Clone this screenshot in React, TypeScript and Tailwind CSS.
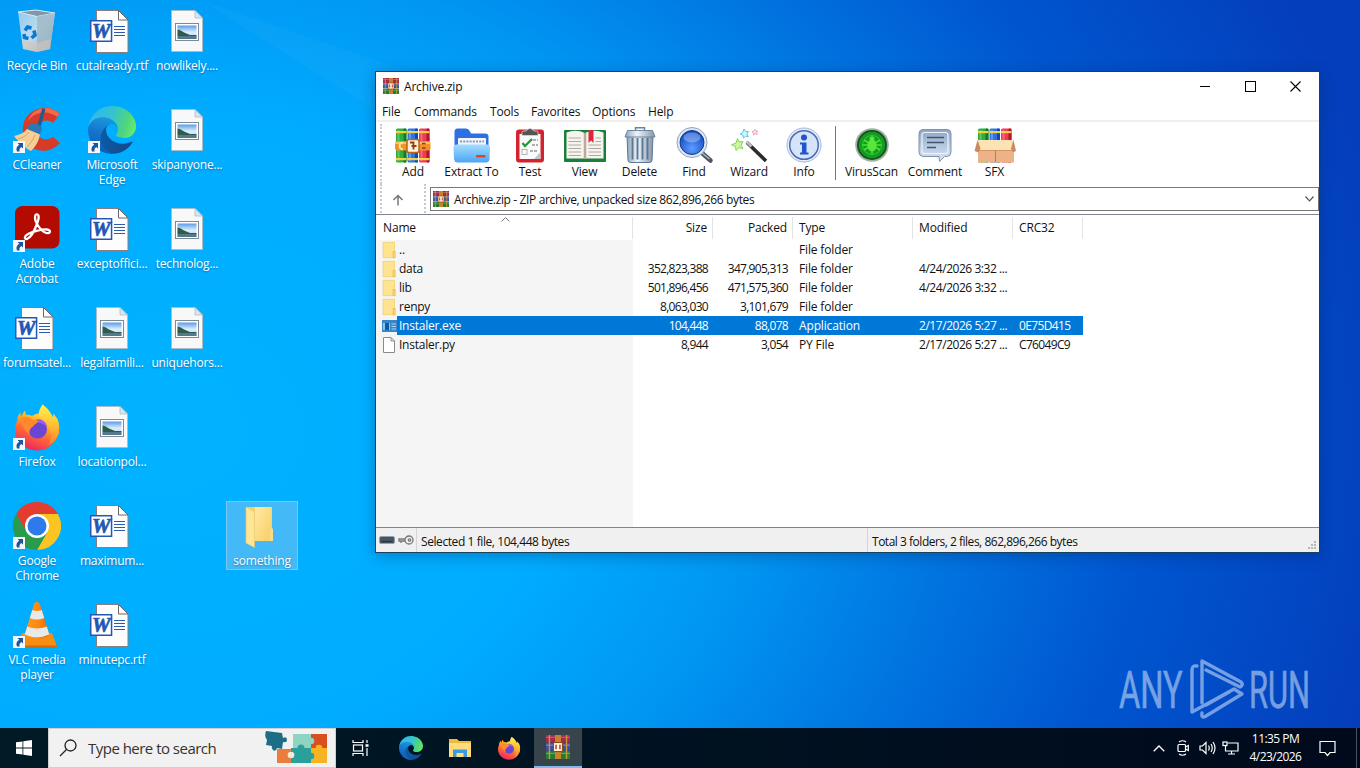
import type { ReactNode } from "react";

type Kind = "bin" | "word" | "image" | "ccleaner" | "edge" | "acrobat" | "firefox" | "chrome" | "vlc" | "folder";

type DesktopItem = {
  kind: Kind;
  label: string;
  place: string;
  shortcut?: boolean;
  selected?: boolean;
};

const desktop: DesktopItem[] = [
  { kind: "bin", label: "Recycle Bin", place: "col-start-1 row-start-1" },
  { kind: "ccleaner", label: "CCleaner", place: "col-start-1 row-start-2", shortcut: true },
  { kind: "acrobat", label: "Adobe\nAcrobat", place: "col-start-1 row-start-3", shortcut: true },
  { kind: "word", label: "forumsatel...", place: "col-start-1 row-start-4" },
  { kind: "firefox", label: "Firefox", place: "col-start-1 row-start-5", shortcut: true },
  { kind: "chrome", label: "Google\nChrome", place: "col-start-1 row-start-6", shortcut: true },
  { kind: "vlc", label: "VLC media\nplayer", place: "col-start-1 row-start-7", shortcut: true },
  { kind: "word", label: "cutalready.rtf", place: "col-start-2 row-start-1" },
  { kind: "edge", label: "Microsoft\nEdge", place: "col-start-2 row-start-2", shortcut: true },
  { kind: "word", label: "exceptoffici...", place: "col-start-2 row-start-3" },
  { kind: "image", label: "legalfamili...", place: "col-start-2 row-start-4" },
  { kind: "image", label: "locationpol...", place: "col-start-2 row-start-5" },
  { kind: "word", label: "maximum...", place: "col-start-2 row-start-6" },
  { kind: "word", label: "minutepc.rtf", place: "col-start-2 row-start-7" },
  { kind: "image", label: "nowlikely....", place: "col-start-3 row-start-1" },
  { kind: "image", label: "skipanyone...", place: "col-start-3 row-start-2" },
  { kind: "image", label: "technolog...", place: "col-start-3 row-start-3" },
  { kind: "image", label: "uniquehors...", place: "col-start-3 row-start-4" },
  { kind: "folder", label: "something", place: "col-start-4 row-start-6", selected: true },
];

const files = [
  { icon: "folder", name: "..", size: "", packed: "", type: "File folder", modified: "", crc: "" },
  { icon: "folder", name: "data", size: "352,823,388", packed: "347,905,313", type: "File folder", modified: "4/24/2026 3:32 ...", crc: "" },
  { icon: "folder", name: "lib", size: "501,896,456", packed: "471,575,360", type: "File folder", modified: "4/24/2026 3:32 ...", crc: "" },
  { icon: "folder", name: "renpy", size: "8,063,030", packed: "3,101,679", type: "File folder", modified: "", crc: "" },
  { icon: "exe", name: "Instaler.exe", size: "104,448", packed: "88,078", type: "Application", modified: "2/17/2026 5:27 ...", crc: "0E75D415", selected: true },
  { icon: "file", name: "Instaler.py", size: "8,944", packed: "3,054", type: "PY File", modified: "2/17/2026 5:27 ...", crc: "C76049C9" },
];

const columns = "grid grid-cols-[257px_80px_80px_120px_100px_70px]";

function Gradients() {
  return (
    <svg className="absolute size-0" aria-hidden>
      <defs>
        <linearGradient id="edgeDark" x1="0.1" y1="0.5" x2="1" y2="0.6">
          <stop offset="0" stopColor="#0c59a4" />
          <stop offset="1" stopColor="#114a8b" />
        </linearGradient>
        <linearGradient id="edgeMid" x1="0.6" y1="0" x2="0.4" y2="1">
          <stop offset="0" stopColor="#1b9de2" />
          <stop offset="0.5" stopColor="#1573cb" />
          <stop offset="1" stopColor="#0a5cb4" />
        </linearGradient>
        <linearGradient id="edgeTop" x1="0" y1="0.4" x2="1" y2="0.6">
          <stop offset="0" stopColor="#35b6ef" />
          <stop offset="0.45" stopColor="#32c3d3" />
          <stop offset="0.8" stopColor="#4fd67b" />
          <stop offset="1" stopColor="#66eb6e" />
        </linearGradient>
        <linearGradient id="fox" x1="0.8" y1="0" x2="0.3" y2="1">
          <stop offset="0" stopColor="#fff04a" />
          <stop offset="0.35" stopColor="#ffb02a" />
          <stop offset="0.6" stopColor="#ff6a35" />
          <stop offset="1" stopColor="#ee1f63" />
        </linearGradient>
        <linearGradient id="foxTail" x1="0.5" y1="0" x2="0.5" y2="1">
          <stop offset="0" stopColor="#fff34f" />
          <stop offset="0.6" stopColor="#ffb52e" />
          <stop offset="1" stopColor="#ff7a33" />
        </linearGradient>
        <linearGradient id="orange" x1="0" x2="1">
          <stop offset="0" stopColor="#ff9a20" />
          <stop offset="0.5" stopColor="#ff8a10" />
          <stop offset="1" stopColor="#e86a00" />
        </linearGradient>
        <linearGradient id="sky" x1="0" y1="0" x2="0" y2="1">
          <stop offset="0" stopColor="#5b9be8" />
          <stop offset="0.5" stopColor="#dcefff" />
          <stop offset="1" stopColor="#a8cbe4" />
        </linearGradient>
        <linearGradient id="folderFill" x1="0" y1="0" x2="1" y2="1">
          <stop offset="0" stopColor="#ffe9a2" />
          <stop offset="1" stopColor="#f7cf63" />
        </linearGradient>
        <linearGradient id="blueFolder" x1="0" y1="0" x2="0" y2="1">
          <stop offset="0" stopColor="#a5dcff" />
          <stop offset="1" stopColor="#4aa6f5" />
        </linearGradient>
        <linearGradient id="steel" x1="0" y1="0" x2="1" y2="0">
          <stop offset="0" stopColor="#8ea4ba" />
          <stop offset="0.4" stopColor="#eef4fa" />
          <stop offset="1" stopColor="#8496a8" />
        </linearGradient>
        <linearGradient id="bubble" x1="0" y1="0" x2="0" y2="1">
          <stop offset="0" stopColor="#8da6c4" />
          <stop offset="1" stopColor="#dbe8f6" />
        </linearGradient>
        <radialGradient id="lens" cx="0.5" cy="0.75" r="0.7">
          <stop offset="0" stopColor="#5f9cff" />
          <stop offset="1" stopColor="#0d49c4" />
        </radialGradient>
        <linearGradient id="binFill" x1="0" y1="0" x2="1" y2="1">
          <stop offset="0" stopColor="#9fd0ee" />
          <stop offset="0.5" stopColor="#d5e3ec" />
          <stop offset="1" stopColor="#8fa9bb" />
        </linearGradient>
      </defs>
    </svg>
  );
}

function Edge({ className }: { className: string }) {
  return (
    <svg viewBox="0 0 256 256" className={className}>
      <path fill="url(#edgeDark)" d="M231 190.5c-3.4 1.8-6.9 3.4-10.5 4.7a101.7 101.7 0 0 1-35.9 6.4c-47.3 0-88.5-32.5-88.5-74.3a31.5 31.5 0 0 1 16.4-27.3c-42.8 1.8-53.8 46.4-53.8 72.5 0 74 68.1 81.4 82.8 81.4 7.9 0 19.8-2.3 27-4.6l1.3-.4a128.3 128.3 0 0 0 66.6-52.8 4 4 0 0 0-5.4-5.6z" />
      <path fill="url(#edgeMid)" d="M105.7 241.4a79.2 79.2 0 0 1-22.7-21.3 80.7 80.7 0 0 1 29.5-120c3.2-1.5 8.5-4.1 15.6-4a32.4 32.4 0 0 1 25.7 13 31.9 31.9 0 0 1 6.3 18.7c0-.2 24.5-79.6-80-79.6-43.9 0-80 41.6-80 78.2a130.2 130.2 0 0 0 12.1 56 128 128 0 0 0 156.4 67 75.5 75.5 0 0 1-62.8-8z" />
      <path fill="url(#edgeTop)" d="M152.3 148.9c-.8 1-3.3 2.5-3.3 5.7 0 2.6 1.7 5.1 4.7 7.2 14.4 10 41.5 8.7 41.6 8.7 10.7 0 21.1-2.9 30.3-8.3a61.4 61.4 0 0 0 30.4-52.9c.3-22.4-8-37.3-11.3-43.9C223.5 23.9 177.7 0 128 0A128 128 0 0 0 0 126.2c.5-36.5 36.8-66 80-66 3.5 0 23.5.3 42 10 16.3 8.6 24.9 18.9 30.8 29.2 6.2 10.7 7.3 24.1 7.3 29.5 0 5.3-2.7 13.3-7.8 19.9z" />
    </svg>
  );
}

function Firefox({ className }: { className: string }) {
  return (
    <svg viewBox="0 0 48 48" className={className}>
      <path fill="url(#fox)" d="M4 18C4 14 6 11 7.500 9.500L8 14C9.500 11 10.500 9 12 7.500L13 12C15 11.500 17 12 19 13C22 11 25 10 28 11L44 15C46.500 21 47 26 45 32C41 42 34 47.500 24.500 47.500C12 47.500 2 38 2 27C2 23 2.800 20.500 4 18Z" />
      <path fill="url(#foxTail)" d="M29.500 1.500C35 5 38 10 40 14.500L40.500 10.500C45 16 47.500 24 45.500 31C43 38 39 41 34 42C38 38 39 33 37.500 27C36 20 31 19 28 15C23.500 12 27 5 29.500 1.500Z" />
      <circle cx="24.500" cy="26" r="9.500" fill="#6a45d6" />
      <path fill="#9a5bf0" d="M24 16.500C29 15.500 33 19 34 24C32 22 29 20 26 20Z" />
      <path fill="#ff8a2c" d="M8 15C12 13 17 13.500 19 16.500L26 17.500C25 20.500 21 21 20 23.500C17 25 15.500 29 17 32C12 29 9 22 8 15Z" />
    </svg>
  );
}

const deskIcons: Record<Kind, ReactNode> = {
  bin: (
    <svg viewBox="0 0 48 48" className="size-12 translate-y-px">
      <path d="M5 4L24 8L42 5L37 41L24 44L10 41Z" fill="url(#binFill)" opacity="0.9" />
      <path d="M5 4L23 2L42 5L24 8.500Z" fill="#7f97a8" stroke="#dcebf4" />
      <path d="M24 8.500L42 5L37 41L24 44Z" fill="#9db4c2" opacity="0.75" />
      <path d="M9 32L24 35L38 31L37 41L24 44L10.500 41Z" fill="#d8c4b8" opacity="0.6" />
      <g fill="none" stroke="#0b78d4" strokeWidth="3.600">
        <path d="M12 22.500L14.500 19L18.500 20" />
        <path d="M21 22.500L22 27L18.500 30" />
        <path d="M15.500 30.500L11.500 29.500L11 26" />
      </g>
    </svg>
  ),
  word: (
    <svg viewBox="0 0 48 48" className="size-12 translate-y-px">
      <path d="M8.500 2.500H30.500L40 12V44.500H8.500Z" fill="#fdfdfd" stroke="#857d80" />
      <path d="M30.500 2.500V12H40Z" fill="#fff" stroke="#6c6668" />
      <path d="M26 18.500H37M26 21.500H37M26 24.500H37M26 27.500H37" stroke="#2a5db0" strokeWidth="1.100" />
      <rect x="2" y="12" width="22.300" height="22" fill="#2356b5" />
      <rect x="3.500" y="13.500" width="19.300" height="19" fill="#fff" />
      <text x="4" y="29.800" fontSize="20" textLength="18.500" lengthAdjust="spacingAndGlyphs" fontWeight="bold" fontStyle="italic" fill="#2356b5" stroke="#2356b5" strokeWidth="0.700" fontFamily="Liberation Serif, serif">W</text>
    </svg>
  ),
  image: (
    <svg viewBox="0 0 48 48" className="size-12 translate-y-px">
      <path d="M8.500 2.500H32L39.500 10V43.500H8.500Z" fill="#f8f8f8" stroke="#bcb6b2" strokeWidth="0.700" />
      <path d="M32 2.500V10H39.500Z" fill="#d5e8f2" stroke="#a9b4bb" strokeWidth="0.700" />
      <rect x="12.500" y="15.500" width="23" height="17" fill="#fff" stroke="#7d8a92" />
      <rect x="14.500" y="17.500" width="19" height="13.500" fill="url(#sky)" />
      <path d="M14.500 21.500C18 22 22 25.500 27 27H33.500V28H14.500Z" fill="#2d5c4a" />
      <path d="M14.500 28H33.500V31H14.500Z" fill="#54788c" />
    </svg>
  ),
  ccleaner: (
    <svg viewBox="0 0 48 48" className="size-12">
      <path d="M47 8L40 17C34 12 26 15 24.500 23C23.500 31 31 37 40 31L47 37C39 46 27 47 18 41C8 34 7 18 15 9C24 0 39 -1 47 8Z" fill="#d83a28" />
      <path d="M47 8L44 11C36 4 22 5 15 15C17 4 35 -4 47 8Z" fill="#f06a4c" />
      <path d="M30.500 4L26 20" stroke="#1d5d95" strokeWidth="3.400" strokeLinecap="round" />
      <path d="M16 19C20 16 27 18 29 22L27 29L14 24Z" fill="#2a78b4" />
      <path d="M14 23L27 28.500C26 35 23 40 18 45C12 42 6 36 1 30C6 29 11 27 14 23Z" fill="#f5cf96" />
      <path d="M16 26C13 30 9 32 5 33M22 29C20 34 17 38 14 41" stroke="#d9a763" fill="none" />
    </svg>
  ),
  edge: <Edge className="size-12" />,
  acrobat: (
    <svg viewBox="0 0 48 48" className="size-12">
      <rect x="2" y="1" width="44.500" height="42.500" rx="7.500" fill="#b30b00" />
      <path d="M23 9.500C26 8.500 26.500 12.500 24.500 17.500C22 24.500 18 32.500 14 34C11 34.500 11 31 15 29C20 26.500 29 24 34 24.500C38.500 25 37.500 29 33.500 28C28 26.500 22 17.500 22 12.500C22 11 22 10 23 9.500Z" fill="none" stroke="#fff" strokeWidth="2.300" />
    </svg>
  ),
  firefox: <Firefox className="size-12" />,
  chrome: (
    <svg viewBox="0 0 48 48" className="size-12">
      <path d="M3.200 12A24 24 0 0 1 44.800 12H24L13.600 30Z" fill="#e53c30" />
      <path d="M44.800 12A24 24 0 0 1 24 48L34.400 30L24 12Z" fill="#fcc420" />
      <path d="M3.200 12A24 24 0 0 0 24 48L34.400 30H13.600Z" fill="#2a9a4b" />
      <circle cx="24" cy="24" r="12" fill="#fff" />
      <circle cx="24" cy="24" r="9.500" fill="#2d7bea" />
    </svg>
  ),
  vlc: (
    <svg viewBox="0 0 48 48" className="size-12">
      <path d="M9 32H39L44 45.500H4Z" fill="#f98d14" />
      <path d="M4 44.500H44V47H4Z" fill="#d96a00" />
      <path d="M21.500 2Q24 0 26.500 2L36.500 34Q24 42 11.500 34Z" fill="url(#orange)" />
      <path d="M19.300 9Q24 11 28.700 9L31.300 17Q24 20 16.800 17Z" fill="#e9e9e9" />
      <path d="M14.200 25.500Q24 29.500 33.800 25.500L36.300 33.500Q24 39 11.700 33.500Z" fill="#e9e9e9" />
    </svg>
  ),
  folder: (
    <svg viewBox="0 0 48 48" className="size-12 translate-y-px">
      <path d="M8 4H34V27H35V38H14Z" fill="#f3d06f" />
      <path d="M17 4H33.500V38H17Z" fill="url(#folderFill)" />
      <path d="M32 25.500H35V38H32Z" fill="#f9dc8b" />
      <path d="M8 4L16.500 9V44.500L8 40Z" fill="#ffe697" stroke="#eac96e" strokeWidth="0.600" />
    </svg>
  ),
};

function ShortcutArrow() {
  return (
    <svg viewBox="0 0 12 12" className="absolute bottom-px left-0 size-3">
      <path d="M0 0H12V12H0Z" fill="#f4f7fb" />
      <path d="M4.500 2H10V7.500L8.300 5.900C6.500 7 6.200 8.500 6.600 10.500H4C2.800 7.500 4 5 6.300 3.800Z" fill="#20559b" />
    </svg>
  );
}

function DesktopTile({ item }: { item: DesktopItem }) {
  return (
    <div
      className={`${item.place} ml-px mt-1.5 h-[69px] w-[72px] flex flex-col items-center border ${
        item.selected ? "border-[#7cc6f5] bg-[#43baf7]" : "border-transparent"
      }`}
    >
      <div className="relative size-12 shrink-0">
        {deskIcons[item.kind]}
        {item.shortcut && <ShortcutArrow />}
      </div>
      <div className="mt-[3px] text-center text-[12px] leading-[15px] tracking-[-0.2px] whitespace-pre text-white [text-shadow:0_1px_2px_#004a8099]">
        {item.label}
      </div>
    </div>
  );
}

function WinrarIcon({ className }: { className: string }) {
  return (
    <svg viewBox="0 0 16 16" className={className}>
      <rect y="0" width="16" height="5" fill="#a8284c" />
      <rect y="5.300" width="16" height="5" fill="#3a50a8" />
      <rect y="10.700" width="16" height="5.300" fill="#2a7a32" />
      <path d="M0 1.500H16M0 6.800H16M0 12.200H16" stroke="#fff" strokeOpacity="0.300" strokeWidth="0.800" />
      <path d="M2.300 0V16M13.700 0V16" stroke="#c89a3c" strokeWidth="0.900" />
      <rect x="6" width="4" height="16" fill="#c9822c" />
      <rect x="5" y="5" width="6" height="6" fill="#fff3d8" stroke="#8a4a1c" strokeWidth="0.700" />
      <path d="M6.700 6.500V9.500M9.300 6.500V9.500" stroke="#c2392b" />
    </svg>
  );
}

function Books() {
  return (
    <>
      {[
        { x: 1, fill: "#2fae3c", dark: "#14792a" },
        { x: 12.5, fill: "#2f74e6", dark: "#1548a8" },
        { x: 24, fill: "#ee3a55", dark: "#b3142f" },
      ].map((b) => (
        <g key={b.x}>
          <rect x={b.x} y="1.500" width="10.500" height="34" rx="1.500" fill={b.fill} />
          <rect x={b.x + 7.5} y="1.500" width="3" height="34" rx="1" fill={b.dark} />
          <rect x={b.x + 1.5} y="3" width="2" height="31" fill="#fff" opacity="0.250" />
          <rect x={b.x} y="4" width="10.500" height="2.200" fill="#f4d23a" />
          <rect x={b.x} y="31" width="10.500" height="2.200" fill="#f4d23a" />
        </g>
      ))}
    </>
  );
}

const tools: { label: string; width: string; icon: ReactNode; split?: boolean }[] = [
  {
    label: "Add",
    width: "w-[54px]",
    icon: (
      <>
        <Books />
        <rect y="14" width="35.500" height="9.500" rx="2" fill="#f0932b" />
        <path d="M0 16H35.500" stroke="#ffd27a" strokeWidth="1.500" />
        <path d="M8 16C3.500 15 3.500 23 8 22" fill="none" stroke="#ffe79a" strokeWidth="1.800" />
        <rect x="12" y="12.500" width="12" height="13" rx="2" fill="#fff2d8" stroke="#bd6316" strokeWidth="1.500" />
        <path d="M15 15.500H18.500V22.500M16.500 19H21.500" fill="none" stroke="#8d3f16" strokeWidth="1.800" />
        <path d="M27 16.500H30.500M27 21H30.500" stroke="#8d3f16" strokeWidth="1.600" />
      </>
    ),
  },
  {
    label: "Extract To",
    width: "w-[63px]",
    icon: (
      <>
        <path d="M0.500 5Q0.500 1.500 3.500 1.500H12Q14.500 1.500 16 4.500L17 6.500H31Q34.500 6.500 34.500 9.500V28H0.500Z" fill="#2f6fe4" />
        <rect x="4" y="11" width="28" height="12" rx="1" fill="#f2f6fc" />
        <path d="M6 14.500H30" stroke="#8899b8" strokeWidth="1.800" strokeDasharray="2 1.200" />
        <path d="M-0.500 20Q-0.500 17.500 2.500 17.500H33Q36 17.500 36 20L35.500 32Q35 35.500 32 35.500H3.500Q0.500 35.500 0 32Z" fill="url(#blueFolder)" />
        <rect x="22" y="28" width="9.500" height="2.600" rx="0.800" fill="#e5402f" />
      </>
    ),
  },
  {
    label: "Test",
    width: "w-[54px]",
    icon: (
      <>
        <rect x="4" y="2.500" width="28" height="33" rx="3" fill="#d2232f" />
        <rect x="7.500" y="7" width="21" height="25" fill="#fafafa" />
        <path d="M28.500 25V32H22Z" fill="#bfc5cc" />
        <path d="M10 8.500V5.500Q10 4 11.500 4H14Q18 -1 22 4H24.500Q26 4 26 5.500V8.500Z" fill="#555" stroke="#d8d8d8" strokeWidth="0.800" />
        <path d="M10.500 16L13 19L20 12" fill="none" stroke="#239b3a" strokeWidth="2.400" />
        <path d="M21 13H26M20 18H26M18 24H26" stroke="#666" strokeWidth="1.200" strokeDasharray="3 1" />
        <rect x="10" y="22.500" width="5" height="5" fill="none" stroke="#aaa" strokeWidth="0.900" />
      </>
    ),
  },
  {
    label: "View",
    width: "w-[55px]",
    icon: (
      <>
        <rect x="-3" y="3" width="42" height="32" rx="1" fill="#17803a" />
        <path d="M-0.500 5.500Q9 2 18 6Q27 2 36.500 5.500V31.500H-0.500Z" fill="#f7f4ee" />
        <path d="M18 6V32" stroke="#b9aa99" strokeWidth="2.500" />
        <path d="M1.500 11H14M1.500 14.500H14M1.500 18H14M1.500 21.500H14M1.500 25H14M1.500 28.500H14M21.500 18H34M21.500 21.500H34M21.500 25H34M21.500 28.500H34M28.500 11H34M28.500 14.500H34" stroke="#a5a09b" strokeWidth="0.900" />
        <path d="M21.500 3H26.500V16L24 13.500L21.500 16Z" fill="#d8283a" />
      </>
    ),
  },
  {
    label: "Delete",
    width: "w-[55px]",
    icon: (
      <>
        <path d="M5 9H31L30 33.500Q29.800 35.500 27.500 35.500H8.500Q6.200 35.500 6 33.500Z" fill="url(#steel)" stroke="#5a7896" />
        <path d="M10.500 11V32.500M15.500 11V32.500M20.500 11V32.500M25.500 11V32.500" stroke="#5a7693" strokeWidth="1.900" />
        <path d="M13.500 3V0.800H22.500V3" fill="none" stroke="#6e8296" strokeWidth="1.500" />
        <path d="M5.500 3.500H30.500L33 10H3Z" fill="url(#steel)" stroke="#617d99" strokeWidth="0.900" />
      </>
    ),
  },
  {
    label: "Find",
    width: "w-[54px]",
    icon: (
      <>
        <path d="M26 26L34.500 33.500" stroke="#4f565e" strokeWidth="4.500" strokeLinecap="round" />
        <path d="M25 25L33.500 32" stroke="#aeb7c0" strokeWidth="1.500" />
        <circle cx="16" cy="15.500" r="15" fill="#dfe8f3" stroke="#8fa5bd" />
        <circle cx="16" cy="15.500" r="12" fill="url(#lens)" stroke="#183a85" />
        <ellipse cx="16" cy="10.500" rx="8.500" ry="5" fill="#fff" opacity="0.300" />
      </>
    ),
  },
  {
    label: "Wizard",
    width: "w-[56px]",
    icon: (
      <>
        <path d="M16 15.500L35 34" stroke="#2b2b2b" strokeWidth="3.600" />
        <path d="M15.500 14.500L20.500 19.500" stroke="#bbb" strokeWidth="3" />
        <path d="M6.500 11.500L8 15L12 14.500L10 18L12 21.500L8 20.700L5 23.500L4.500 19.500L0.500 17.800L5 16Z" fill="#c9f7a2" stroke="#7fce4c" strokeWidth="0.900" />
        <path d="M13 2L14.500 4.700L17.500 4.500L15.800 7L17.300 9.500L14.500 9.200L12.500 11.200L12 8.200L9.200 7L12 5.300Z" fill="#d9f9ff" stroke="#4ccbe6" />
        <path d="M23.800 2.300L25 4H27L25.700 5.600L26.300 7.500L24.200 6.800L22.500 8V6L21 4.800L23 4.200Z" fill="#ffe0e6" stroke="#e79aa8" strokeWidth="0.800" />
      </>
    ),
  },
  {
    label: "Info",
    width: "w-[54px]",
    icon: (
      <>
        <circle cx="18" cy="18" r="17" fill="#e5eefa" stroke="#a5b8d8" />
        <circle cx="18" cy="18" r="14.300" fill="#d6e4fa" stroke="#4a6cb8" strokeWidth="1.500" />
        <circle cx="18" cy="10.500" r="3" fill="#2054c8" />
        <path d="M14 15.500H20.500V25.500H22.500V27.500H14V25.500H16V17.500H14Z" fill="#2054c8" />
      </>
    ),
    split: true,
  },
  {
    label: "VirusScan",
    width: "w-[63px]",
    icon: (
      <>
        <circle cx="18" cy="18" r="16.800" fill="#a3b0a4" />
        <circle cx="18" cy="18" r="15" fill="#12541c" />
        <circle cx="18" cy="18" r="13.200" fill="#169a22" />
        <circle cx="18" cy="18" r="9.500" fill="none" stroke="#2fd02f" strokeWidth="0.900" />
        <path d="M18 9.500V27M10 13L26 23M10 23L26 13M8.500 18H27.500" stroke="#48e236" strokeWidth="1.500" />
        <ellipse cx="18" cy="18.500" rx="4.500" ry="6" fill="#58e83c" />
        <circle cx="18" cy="12" r="2.500" fill="#58e83c" />
      </>
    ),
  },
  {
    label: "Comment",
    width: "w-[64px]",
    icon: (
      <>
        <path d="M6 2.500H30Q34 2.500 34 6.500V25Q34 29 30 29.500H27.500L22.500 34.500L22 29.500H6Q2 29 2 25V6.500Q2 2.500 6 2.500Z" fill="url(#bubble)" stroke="#8193aa" />
        <rect x="5" y="5.500" width="26" height="21" rx="2.500" fill="none" stroke="#edf4fc" strokeWidth="1.200" />
        <path d="M10 10.500H27M10 15.500H27M10 20.500H19" stroke="#45566c" strokeWidth="1.500" />
      </>
    ),
  },
  {
    label: "SFX",
    width: "w-[55px]",
    icon: (
      <>
        <Books />
        <path d="M1 16H37V35.500H1Z" fill="#edb287" />
        <path d="M0.500 13H36.500L35 23H3Z" fill="#fbe3b4" />
        <path d="M0.500 13L-2.500 24L1.500 25.500L3.500 21.500Z" fill="#c98a60" />
        <path d="M36.500 13L39 24L35.500 25.500L34 21.500Z" fill="#c98a60" />
        <path d="M18.500 23V35" stroke="#c07a4c" />
        <path d="M1 23.500H37" stroke="#d08c5c" strokeWidth="0.800" />
      </>
    ),
  },
];

function Grip() {
  return <div className="w-0.5 border-l-2 border-dotted border-[#c4ccd2]" />;
}

function RowIcon({ icon }: { icon: string }) {
  if (icon === "folder") {
    return (
      <svg viewBox="0 0 16 18" className="h-[18px] w-4 shrink-0">
        <path d="M1 1.300H12.500V16.700H1Z" fill="#ffe48f" stroke="#efc65a" strokeWidth="0.600" />
        <path d="M11 10.500H13.200V16.700H11Z" fill="#f9d774" stroke="#dfb243" strokeWidth="0.600" />
      </svg>
    );
  }
  if (icon === "exe") {
    return (
      <svg viewBox="0 0 16 18" className="h-[18px] w-4 shrink-0">
        <rect x="-1" y="3" width="17" height="12" fill="#3a86c6" />
        <rect x="1" y="6" width="7" height="7" fill="#8cc4ea" />
        <rect x="3" y="6" width="4" height="7" fill="#0a5cae" />
        <path d="M9.500 7H14M9.500 9.500H14M9.500 12H14" stroke="#a9d6f2" strokeWidth="1.200" />
      </svg>
    );
  }
  return (
    <svg viewBox="0 0 16 18" className="h-[18px] w-4 shrink-0">
      <path d="M1.500 1.500H9L12.500 5V16.500H1.500Z" fill="#fff" stroke="#8b8b8b" />
      <path d="M9 1.500V5H12.500" fill="none" stroke="#8b8b8b" />
    </svg>
  );
}

function ArchiveWindow() {
  return (
    <div className="absolute left-[375px] top-[71px] flex h-[482px] w-[945px] flex-col border border-[#16415f] bg-white text-[12px] tracking-[-0.15px] text-[#111] shadow-[0_3px_14px_#00205055]">
      <div className="flex h-[30px] shrink-0 items-center pl-[7px]">
        <WinrarIcon className="-mt-0.5 size-4" />
        <span className="ml-[5px] tracking-[-0.2px]">Archive.zip</span>
        <div className="ml-auto flex w-[120px] justify-between pr-[18px] pb-0.5">
          <svg viewBox="0 0 11 11" className="size-[11px]" stroke="#000" fill="none" shapeRendering="crispEdges">
            <path d="M0.500 5.500H10.500" />
          </svg>
          <svg viewBox="0 0 11 11" className="size-[11px]" stroke="#000" fill="none" shapeRendering="crispEdges">
            <rect x="0.500" y="0.500" width="9.500" height="9.500" />
          </svg>
          <svg viewBox="0 0 11 11" className="size-[11px]" stroke="#000" fill="none">
            <path d="M0.500 0.500L10.500 10.500M10.500 0.500L0.500 10.500" strokeWidth="1.100" />
          </svg>
        </div>
      </div>
      <div className="flex h-5 shrink-0 items-center border-b-2 border-[#efefef] pl-1.5 pt-0.5">
        <span className="w-8">File</span>
        <span className="w-[76px]">Commands</span>
        <span className="w-[41px]">Tools</span>
        <span className="w-[61px]">Favorites</span>
        <span className="w-14">Options</span>
        <span>Help</span>
      </div>
      <div className="flex h-[62px] shrink-0 pl-1 pt-0.5">
        <Grip />
        <div className="ml-1 flex">
          {tools.map((t) => (
            <div key={t.label} className="flex">
              <div className={`${t.width} flex flex-col items-center pt-[3px]`}>
                <svg viewBox="0 0 36 36" className="size-9 shrink-0 overflow-visible">
                  {t.icon}
                </svg>
                <span className="mt-px whitespace-nowrap leading-4">{t.label}</span>
              </div>
              {t.split && <div className="ml-1 mr-1 mt-0.5 h-[54px] w-px bg-[#777]" />}
            </div>
          ))}
        </div>
      </div>
      <div className="flex h-[29px] shrink-0 items-stretch pl-1">
        <Grip />
        <div className="flex w-[42px] items-center justify-center pr-[11px] pt-0.5">
          <svg viewBox="0 0 12 12" className="size-3" fill="none" stroke="#777" strokeWidth="1.500">
            <path d="M6 11.500V1.500M1.500 6L6 1.500L10.500 6" />
          </svg>
        </div>
        <Grip />
        <div className="ml-1 mt-[3px] flex h-6 flex-1 items-center border border-[#777] pl-0.5 pr-1">
          <WinrarIcon className="size-4" />
          <span className="ml-[5px] pt-0.5 tracking-[-0.36px]">Archive.zip - ZIP archive, unpacked size 862,896,266 bytes</span>
          <svg viewBox="0 0 9 6" className="ml-auto h-1.5 w-[9px]" fill="none" stroke="#555" strokeWidth="1.200">
            <path d="M0.500 0.500L4.500 4.800L8.500 0.500" />
          </svg>
        </div>
      </div>
      <div className="mt-px h-[314px] shrink-0 border-y border-[#7e848b]">
        <div className={`${columns} relative h-[25px] items-center pt-px`}>
          <svg viewBox="0 0 9 5" className="absolute left-[125px] top-0.5 h-[5px] w-[9px]" fill="none" stroke="#777">
            <path d="M0.500 4.500L4.500 0.500L8.500 4.500" />
          </svg>
          <div className="flex h-[22px] items-center border-r border-[#e3e3e3] pl-[7px]">Name</div>
          <div className="flex h-[22px] items-center justify-end border-r border-[#e3e3e3] pr-[5px]">Size</div>
          <div className="flex h-[22px] items-center justify-end border-r border-[#e3e3e3] pr-[5px]">Packed</div>
          <div className="flex h-[22px] items-center border-r border-[#e3e3e3] pl-1.5">Type</div>
          <div className="flex h-[22px] items-center border-r border-[#e3e3e3] pl-1.5">Modified</div>
          <div className="flex h-[22px] items-center border-r border-[#e3e3e3] pl-1.5">CRC32</div>
        </div>
        <div className="h-[287px] bg-[linear-gradient(90deg,#f5f5f5_257px,#fff_257px)]">
          {files.map((f) => (
            <div key={f.name} className={`${columns} h-[19px] w-[707px] leading-[19px] whitespace-nowrap ${f.selected ? "text-white" : ""}`}>
              <div className="flex items-center pl-1.5">
                <RowIcon icon={f.icon} />
                <span className={`-ml-px h-[19px] flex-1 pl-0.5 tracking-[-0.25px] ${f.selected ? "bg-[#0078d7]" : ""}`}>{f.name}</span>
              </div>
              <div className={`pr-[5px] text-right tracking-[-0.7px] ${f.selected ? "bg-[#0078d7]" : ""}`}>{f.size}</div>
              <div className={`pr-[5px] text-right tracking-[-0.7px] ${f.selected ? "bg-[#0078d7]" : ""}`}>{f.packed}</div>
              <div className={`pl-1.5 ${f.selected ? "bg-[#0078d7]" : ""}`}>{f.type}</div>
              <div className={`pl-1.5 tracking-[-0.45px] ${f.selected ? "bg-[#0078d7]" : ""}`}>{f.modified}</div>
              <div className={`pl-1.5 tracking-[-0.65px] ${f.selected ? "bg-[#0078d7]" : ""}`}>{f.crc}</div>
            </div>
          ))}
        </div>
      </div>
      <div className="flex flex-1 items-stretch bg-[#f0f0f0]">
        <div className="flex w-[41px] items-center gap-[3px] border-r border-[#d5d5d5] pl-[3px]">
          <svg viewBox="0 0 16 8" className="h-2 w-4">
            <rect x="0.500" y="0.500" width="15" height="7" rx="1.500" fill="#4a545c" stroke="#8fa3b5" />
            <path d="M2.500 5.500H13.500" stroke="#2b3238" />
          </svg>
          <svg viewBox="0 0 16 10" className="h-2.5 w-4" fill="none" stroke="#777" strokeWidth="1.300">
            <circle cx="11" cy="5" r="4" />
            <circle cx="11.500" cy="5" r="1.200" />
            <path d="M7 4H1V6H7M3 6V8" />
          </svg>
        </div>
        <div className="flex w-[451px] items-center border-r border-[#d5d5d5] pl-1 pt-[3px] tracking-[-0.42px]">Selected 1 file, 104,448 bytes</div>
        <div className="flex items-center pl-1 pt-[3px] tracking-[-0.48px]">Total 3 folders, 2 files, 862,896,266 bytes</div>
        <svg viewBox="0 0 9 9" className="ml-auto mr-0.5 mb-0.5 size-[9px] self-end" fill="#b5b5b5">
          <path d="M6 0H8V2H6ZM6 3H8V5H6ZM6 6H8V8H6ZM3 3H5V5H3ZM3 6H5V8H3ZM0 6H2V8H0Z" />
        </svg>
      </div>
    </div>
  );
}

function Watermark() {
  return (
    <svg viewBox="0 0 200 70" className="absolute left-[1116px] top-[655px] h-[70px] w-[200px] overflow-visible" opacity="0.550">
      <g fill="#d5e6fb" stroke="#d5e6fb" strokeWidth="0.500" fontFamily="Roboto, sans-serif" fontSize="51">
        <text transform="translate(3 52.500) scale(0.640 1)">ANY</text>
        <text transform="translate(133 52.500) scale(0.605 1)">RUN</text>
      </g>
      <g fill="none" stroke="#d5e6fb" strokeWidth="3.400" strokeLinejoin="round" strokeLinecap="round">
        <path d="M81 11Q76 10 76 15V57L113 37" />
        <path d="M86 48V6L125 27Q128 30 124 32L90 15" />
        <path d="M86 58Q85 64 90 61L126 39L118 34L90 50" />
      </g>
    </svg>
  );
}

function Puzzle() {
  return (
    <svg viewBox="0 0 66 40" className="h-10 w-[66px]">
      <path d="M30 6H48V20H30Z" fill="#8ed4c2" />
      <path d="M48 6H64V20H48Z" fill="#d9501f" />
      <path d="M14 21H29V35H14Z" fill="#ea7c3c" />
      <path d="M28 20H48V35H28Z" fill="#2ba09a" />
      <path d="M48 20H64V35H48Z" fill="#f6b322" />
      <circle cx="38" cy="20" r="3.500" fill="#2ba09a" />
      <circle cx="28" cy="27" r="3.300" fill="#fbe9d5" />
      <circle cx="48" cy="13" r="3.300" fill="#8ed4c2" />
      <circle cx="56" cy="20" r="3.300" fill="#f6b322" />
      <circle cx="48" cy="28" r="3.300" fill="#2ba09a" />
      <path d="M3 3L19 5L20 10Q24 8 24 12Q24 15 20 14L19 21L14 20Q13 24 10 22Q8 20 9 18L3 17L4 12Q1 8 3 3Z" fill="#1d6d86" />
    </svg>
  );
}

function Taskbar() {
  return (
    <div className="relative flex h-10 shrink-0 items-stretch bg-linear-to-r from-[#001a26] to-[#000a1c] text-white">
      <div className="flex w-12 items-center justify-center">
        <svg viewBox="0 0 16 16" className="size-4" fill="#fff">
          <path d="M0 2.300L6.500 1.400V7.500H0ZM7.300 1.300L16 0V7.500H7.300ZM0 8.400H6.500V14.600L0 13.700ZM7.300 8.400H16V16L7.300 14.700Z" />
        </svg>
      </div>
      <div className="flex w-72 items-center border border-[#d0d0d0] bg-[#f1f1f1] pl-2.5">
        <svg viewBox="0 0 18 18" className="size-[18px]" fill="none" stroke="#222" strokeWidth="1.300">
          <circle cx="11.500" cy="6.500" r="5.500" />
          <path d="M7.500 10.500L1 17" />
        </svg>
        <span className="ml-[11px] text-[15px] tracking-[-0.52px] text-[#333]">Type here to search</span>
        <div className="ml-auto mr-1.5">
          <Puzzle />
        </div>
      </div>
      <div className="flex w-12 items-center justify-center">
        <svg viewBox="0 0 17 16" className="h-4 w-[17px]" fill="none" stroke="#fff" strokeWidth="1.200">
          <path d="M1 0V2.500H11V0M1 16V13.500H11V16M15 0V3M15 8V16" />
          <rect x="1.500" y="5" width="9" height="6" />
          <path d="M13.500 5.500H16.500" strokeWidth="2.500" />
        </svg>
      </div>
      <div className="flex w-[53px] items-center justify-center">
        <Edge className="size-6" />
      </div>
      <div className="flex w-[46px] items-center justify-center">
        <svg viewBox="0 0 22 18" className="h-[18px] w-[22px]">
          <path d="M0 0H8L10 2H22V18H0Z" fill="#f2b83a" />
          <path d="M0 4H22V18H0Z" fill="#ffdb7c" />
          <path d="M4 18V10.500H18V18H14.500V14H7.500V18Z" fill="#3b9ade" />
        </svg>
      </div>
      <div className="flex w-[51px] items-center justify-center">
        <Firefox className="size-6" />
      </div>
      <div className="flex w-12 items-center justify-center border-b-2 border-[#7fb9ee] bg-[#37444c]">
        <WinrarIcon className="size-6" />
      </div>
      <div className="ml-auto flex items-center">
        <svg viewBox="0 0 12 7" className="h-[7px] w-3" fill="none" stroke="#fff" strokeWidth="1.300">
          <path d="M0.700 6.300L6 1L11.300 6.300" />
        </svg>
        <svg viewBox="0 0 12 16" className="ml-3 h-4 w-3" fill="none" stroke="#fff" strokeWidth="1.200">
          <rect x="1" y="4.500" width="7.500" height="7" rx="1" />
          <path d="M8.500 7L11.300 5.500V10.500L8.500 9M2 2Q5.500 -0.500 9 2M2 14Q5.500 16.500 9 14" />
        </svg>
        <svg viewBox="0 0 17 14" className="ml-2.5 h-3.5 w-[17px]" fill="none" stroke="#fff" strokeWidth="1.200">
          <path d="M1 5H3.500L7 1.500V12.500L3.500 9H1ZM9.500 4.500Q11 7 9.500 9.500M12 3Q14.500 7 12 11M14 1Q18 7 14 13" />
        </svg>
        <svg viewBox="0 0 17 14" className="ml-1.5 h-3.5 w-[17px]" fill="none" stroke="#fff" strokeWidth="1.200">
          <path d="M5.500 2H16V10H3.500V5M9.500 10V13M6 13H13" />
          <rect x="1" y="1" width="4" height="3.500" />
        </svg>
        <div className="ml-2.5 w-[53px] text-center text-[12px] leading-[18px] tracking-[-0.55px] whitespace-nowrap">
          <div>11:35 PM</div>
          <div>4/23/2026</div>
        </div>
        <svg viewBox="0 0 17 17" className="ml-[17px] h-[17px] w-[17px]" fill="none" stroke="#fff" strokeWidth="1.200">
          <path d="M1 1.500H16V12.500H11L8.500 15.500L6 12.500H1Z" />
        </svg>
        <div className="ml-5 h-10 w-1 border-l border-[#4a5360]" />
      </div>
    </div>
  );
}

export default function App() {
  return (
    <div className="relative flex h-[768px] w-[1360px] flex-col overflow-hidden bg-[#0078e0] font-['Open_Sans','Noto_Sans',sans-serif] text-[12px]">
      <Gradients />
      <div className="relative flex-1 bg-[radial-gradient(ellipse_1250px_1000px_at_160px_430px,#00b3ff_0%,#00acff_32%,#0096f2_48%,#0074e0_64%,#0056d0_79%,#043ebc_100%)]">
        <svg viewBox="0 0 1360 728" className="absolute inset-0 h-full w-full">
          <path d="M200 0L520 110L375 110Z" fill="#5cc4ff" opacity="0.080" />
        </svg>
        <div className="relative grid w-[300px] auto-rows-[99px] grid-cols-[repeat(4,75px)]">
          {desktop.map((item) => (
            <DesktopTile key={item.label} item={item} />
          ))}
        </div>
        <ArchiveWindow />
        <Watermark />
      </div>
      <Taskbar />
    </div>
  );
}
